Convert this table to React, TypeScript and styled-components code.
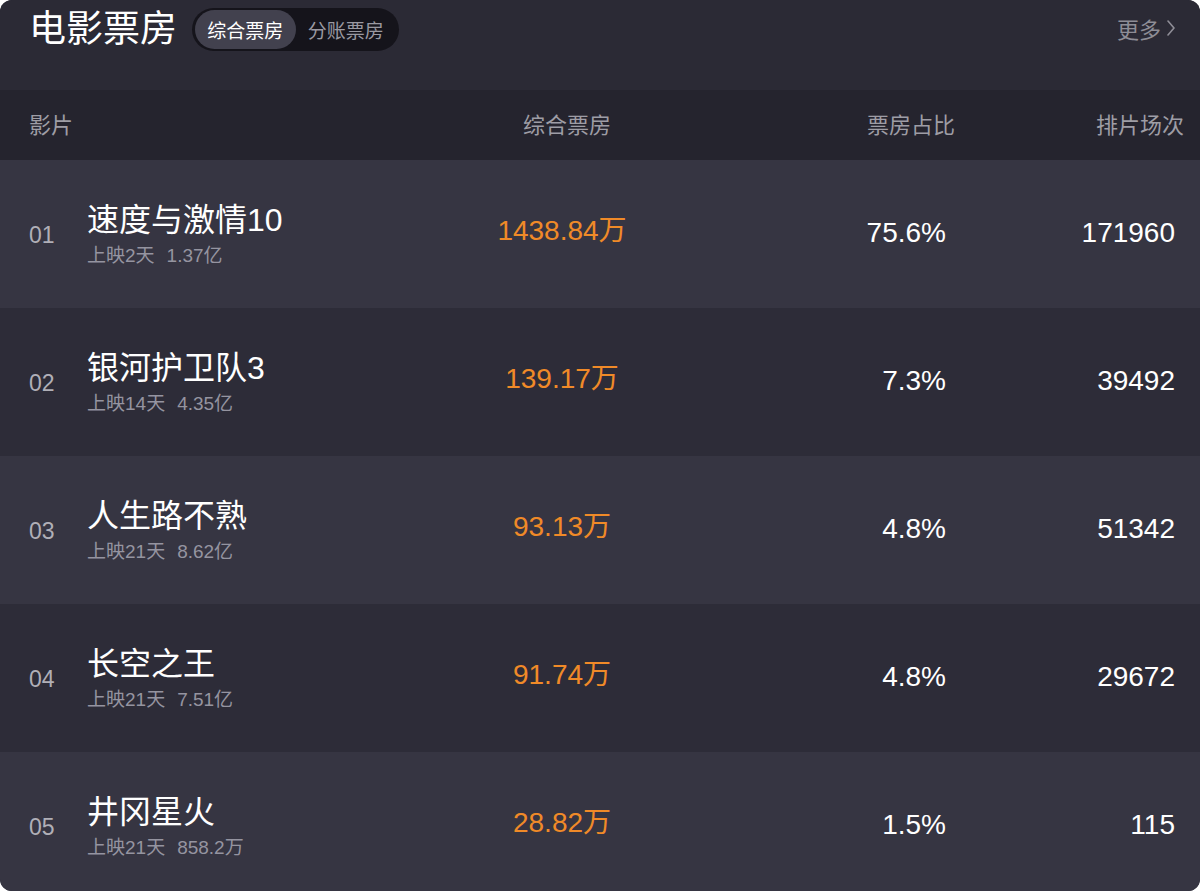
import React from "react";
import styled, { createGlobalStyle } from "styled-components";

const Global = createGlobalStyle`
  html, body { margin: 0; padding: 0; background: #ffffff; }
  body { font-family: "Liberation Sans", "Noto Sans CJK SC", sans-serif; }
  * { box-sizing: border-box; }
`;

const Panel = styled.div`
  width: 1200px;
  height: 891px;
  overflow: hidden;
  border-radius: 12px;
  background: #2b2a35;
  font-family: "Liberation Sans", "Noto Sans CJK SC", sans-serif;
`;

const TopBar = styled.div`
  height: 90px;
  padding: 8px 23px 0 29px;
  display: flex;
  align-items: flex-start;
  background: #2b2a35;
`;

const TopLine = styled.div`
  height: 43px;
  flex: 1;
  display: flex;
  align-items: center;
`;

const Title = styled.h1`
  margin: 0;
  font-size: 37px;
  font-weight: 400;
  color: #ffffff;
  line-height: 1;
  margin-top: -1px;
`;

const Toggle = styled.div`
  margin-left: 15px;
  height: 43px;
  width: 207px;
  padding: 2px 3px;
  border-radius: 22px;
  background: #15141b;
  display: flex;
  align-items: center;
`;

const ToggleItem = styled.div<{ $active?: boolean }>`
  height: 39px;
  width: 101px;
  border-radius: 20px;
  display: flex;
  align-items: center;
  justify-content: center;
  font-size: 19px;
  color: ${(p) => (p.$active ? "#ffffff" : "#9a99a1")};
  background: ${(p) => (p.$active ? "#42414e" : "transparent")};
`;

const More = styled.div`
  margin-left: auto;
  display: flex;
  align-items: center;
  gap: 6px;
  font-size: 22px;
  color: #8e8d96;
  margin-top: -4px;
  margin-right: 2px;
`;

const Grid = styled.div<{ $bg: string; $h: number }>`
  display: grid;
  grid-template-columns: 421px 224px 272px 229px;
  padding: 0 25px 0 29px;
  height: ${(p) => p.$h}px;
  flex-shrink: 0;
  align-items: center;
  background: ${(p) => p.$bg};
`;

const HeadCell = styled.div<{ $align: "left" | "center" | "right"; $shift?: number }>`
  font-size: 22px;
  color: #9e9da5;
  text-align: ${(p) => p.$align};
  transform: translate(${(p) => p.$shift ?? 0}px, -2px);
`;

const FilmCell = styled.div`
  display: flex;
  align-items: center;
`;

const Rank = styled.div`
  width: 58px;
  font-size: 23px;
  color: #b0afb7;
  padding-top: 2px;
`;

const FilmInfo = styled.div`
  display: flex;
  flex-direction: column;
  gap: 7px;
`;

const FilmName = styled.div`
  font-size: 32px;
  color: #ffffff;
  line-height: 36px;
`;

const FilmMeta = styled.div`
  font-size: 19px;
  color: #9594a0;
  line-height: 22px;
  display: flex;
  gap: 12px;
`;

const Value = styled.div<{ $align: "center" | "right"; $orange?: boolean }>`
  font-size: 28px;
  line-height: 32px;
  text-align: ${(p) => p.$align};
  color: ${(p) => (p.$orange ? "#f08a28" : "#ffffff")};
  transform: translateY(${(p) => (p.$orange ? -3 : -1)}px);
`;

const films = [
  { rank: "01", name: "速度与激情10", days: "上映2天", total: "1.37亿", box: "1438.84万", pct: "75.6%", shows: "171960" },
  { rank: "02", name: "银河护卫队3", days: "上映14天", total: "4.35亿", box: "139.17万", pct: "7.3%", shows: "39492" },
  { rank: "03", name: "人生路不熟", days: "上映21天", total: "8.62亿", box: "93.13万", pct: "4.8%", shows: "51342" },
  { rank: "04", name: "长空之王", days: "上映21天", total: "7.51亿", box: "91.74万", pct: "4.8%", shows: "29672" },
  { rank: "05", name: "井冈星火", days: "上映21天", total: "858.2万", box: "28.82万", pct: "1.5%", shows: "115" },
];

export default function App() {
  return (
    <>
      <Global />
      <Panel>
        <TopBar>
          <TopLine>
            <Title>电影票房</Title>
            <Toggle>
              <ToggleItem $active>综合票房</ToggleItem>
              <ToggleItem>分账票房</ToggleItem>
            </Toggle>
            <More>
              <span>更多</span>
              <svg width="8" height="16" viewBox="0 0 8 16" fill="none">
                <polyline points="1,1 7,8 1,15" stroke="#8e8d96" strokeWidth="1.6" strokeLinecap="round" strokeLinejoin="round" />
              </svg>
            </More>
          </TopLine>
        </TopBar>
        <Grid $bg="#25242e" $h={70}>
          <HeadCell $align="left">影片</HeadCell>
          <HeadCell $align="center" $shift={5}>综合票房</HeadCell>
          <HeadCell $align="right" $shift={9}>票房占比</HeadCell>
          <HeadCell $align="right" $shift={9}>排片场次</HeadCell>
        </Grid>
        {films.map((f, i) => (
          <Grid key={f.rank} $bg={i % 2 === 0 ? "#363542" : "#2d2c38"} $h={148}>
            <FilmCell>
              <Rank>{f.rank}</Rank>
              <FilmInfo>
                <FilmName>{f.name}</FilmName>
                <FilmMeta>
                  <span>{f.days}</span>
                  <span>{f.total}</span>
                </FilmMeta>
              </FilmInfo>
            </FilmCell>
            <Value $align="center" $orange>{f.box}</Value>
            <Value $align="right">{f.pct}</Value>
            <Value $align="right">{f.shows}</Value>
          </Grid>
        ))}
      </Panel>
    </>
  );
}
